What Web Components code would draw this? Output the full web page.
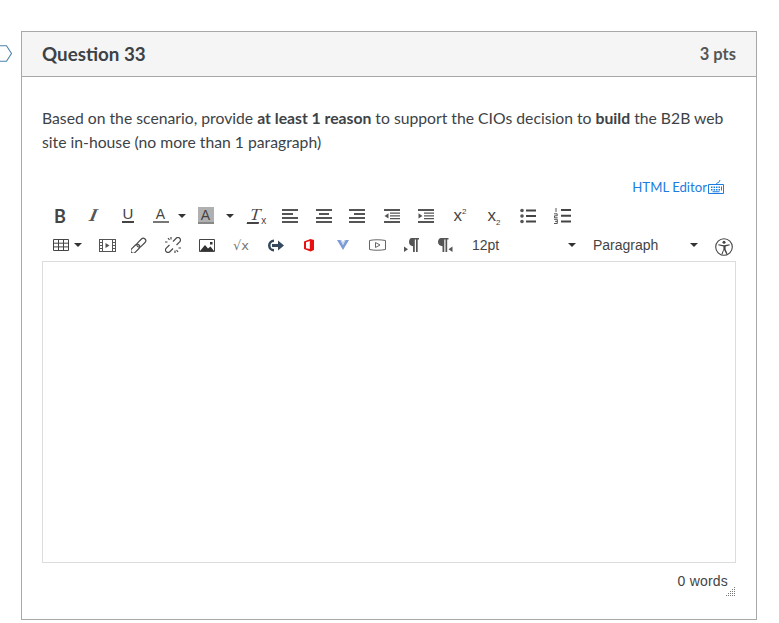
<!DOCTYPE html>
<html>
<head>
<meta charset="utf-8">
<title>Question 33</title>
<style>
  html, body { margin: 0; height: 100%; background: #fff; overflow: hidden; }
  body { font-family: Lato, "Liberation Sans", sans-serif; color: #3d4246; }
</style>
</head>
<body>
<quiz-page>
  <quiz-question name="Question 33" points="3 pts">
    <p>Based on the scenario, provide <b>at least 1 reason</b> to support the CIOs decision to <b>build</b> the B2B web<br>site in-house (no more than 1 paragraph)</p>
    <rce-editor slot="editor"></rce-editor>
  </quiz-question>
</quiz-page>

<script>
const ICONS = {
  table: `<path fill="none" stroke="#444" d="M.5.5h15v11H.5zM.5 4.200h15M.5 7.900h15M5.500.5v11M10.500.5v11"/>`,
  media: `<path fill="#555" fill-rule="evenodd" d="M0 0h17v13H0zM1 1v2h2V1zM1 4v2h2V4zM1 7v2h2V7zM1 10v2h2v-2zM14 1v2h2V1zM14 4v2h2V4zM14 7v2h2V7zM14 10v2h2v-2zM4 1v11h9V1z"/><path fill="#555" d="M6.500 4l4 2.500-4 2.500z"/>`,
  link: `<g fill="none" stroke="#4a4a4a" stroke-width="1.200" transform="rotate(-45 8 8)"><rect x="-2.500" y="5.500" width="10.500" height="5" rx="2.500"/><rect x="6" y="5.500" width="10.500" height="5" rx="2.500"/></g>`,
  unlink: `<g fill="none" stroke="#4a4a4a" stroke-width="1.200"><g transform="rotate(-45 8 8)"><path d="M5.500 5.500H1a2.500 2.500 0 0 0 0 5h4.500"/><path d="M10.500 5.500H15a2.500 2.500 0 0 1 0 5h-4.500"/></g><path d="M3 1l1.500 2M0 5h2.500M6 0v2.500M13 15l-1.500-2M16 11h-2.500M10 16v-2.500"/></g>`,
  image: `<path fill="none" stroke="#444" d="M.5.5h15v12H.5z"/><path fill="#333" d="M1 12l5-6 3 3.500 2.500-2L15 12zM11 3h2.500v2.500H11z"/>`,
  embed: `<path fill="#34495e" d="M8 1.500a6 6 0 1 0 0 12V11a3.500 3.500 0 1 1 0-7z"/><path fill="#34495e" d="M6 6h6V2.500l6 5-6 5V9H6z"/>`,
  office: `<path fill="#e81010" fill-rule="evenodd" d="M0 2.500L6.500 0 10 1v10l-3.500 1.500L0 10zM2 3.300v5.900l3.800.9V1.900z"/>`,
  vee: `<path fill="#7d9bd6" d="M0 0h3.500l2.500 5 2.500-5H12L6 10z"/><path fill="#c7d5ee" d="M3.500 0h1.300l1.200 2.500L7.200 0h1.300L6 5z"/>`,
  video: `<path fill="none" stroke="#666" d="M.5 1.500C5 .5 11 .5 16.500 1.500v9C11 11.500 5 11.500.5 10.500z"/><path fill="none" stroke="#666" d="M6.500 3.500l4.500 2.500-4.500 2.500z"/>`,
  ltr: `<path fill="#555" d="M7.500 0H15v1.500h-1.300V14H12V1.500h-1.200V14H9V8.200C6.600 8.200 5 6.500 5 4.100S6 0 7.500 0z"/><path fill="#555" d="M0 8.500l4 2.700-4 2.700z"/>`,
  rtl: `<path fill="#555" d="M3 0h7.500v1.500H9.200V14H7.500V1.500H6.300V14H4.500V8.200C2 8.200 0 6.500 0 4.100S1.200 0 3 0z"/><path fill="#555" d="M14.500 8.500l-4 2.700 4 2.700z"/>`,
  a11y: `<circle cx="9" cy="9" r="8.300" fill="none" stroke="#444" stroke-width="1.100"/><circle cx="9" cy="4.300" r="1.500" fill="#444"/><path fill="#444" d="M3.500 6.200L9 7.200l5.500-1 .3 1-4.200 1.300v2.700l1.900 4.600-1.100.4L9 11.800l-1.400 4.400-1.100-.4 1.900-4.600V8.500L3.200 7.200z"/>`,
  keyboard: `<path fill="none" stroke="#1c7ce0" stroke-width="1" d="M.5 5.500h15v9H.5zM8 5.500C8 3.500 12 4 12 1"/><path fill="#1c7ce0" d="M3 7.500h1.500V9H3zM5.500 7.500H7V9H5.500zM8 7.500h1.500V9H8zM10.500 7.500H12V9h-1.500zM3 10h1.500v1.500H3zM5.500 10H7v1.500H5.500zM8 10h1.500v1.500H8zM10.500 10H12v1.500h-1.500zM13 7.500h1V11.500h-1zM4.500 12.300h7v1h-7z"/>`,
  left: `<path fill="#555" d="M0 0h16v2H0zM0 4h11v2H0zM0 8h16v2H0zM0 12h16v2H0z"/>`,
  center: `<path fill="#555" d="M0 0h16v2H0zM3 4h10v2H3zM0 8h16v2H0zM0 12h16v2H0z"/>`,
  right: `<path fill="#555" d="M0 0h16v2H0zM5 4h11v2H5zM0 8h16v2H0zM0 12h16v2H0z"/>`,
  outdent: `<path fill="#555" d="M0 0h16v2H0zM6 3.500h10v1.300H6zM6 6.200h10v1.300H6zM6 8.900h10v1.300H6zM0 12h16v2H0zM4.500 4.200v5.400L.5 6.900z"/>`,
  indent: `<path fill="#555" d="M0 0h16v2H0zM6 3.500h10v1.300H6zM6 6.200h10v1.300H6zM6 8.900h10v1.300H6zM0 12h16v2H0zM.5 4.200v5.400l4-2.700z"/>`,
  bullets: `<path fill="#444" d="M6 1.500h10v2H6zM6 7h10v2H6zM6 12.500h10v2H6z"/><circle cx="2" cy="2.500" r="1.800" fill="#555"/><circle cx="2" cy="8" r="1.800" fill="#555"/><circle cx="2" cy="13.500" r="1.800" fill="#555"/>`,
  numbers: `<path fill="#444" d="M7 1h10v2H7zM7 6.800h10v2H7zM7 12.500h10v2H7z"/><path fill="none" stroke="#444" stroke-width=".9" d="M2 0v4M0 5.800h3.200v2H.5v2h3.200M0 11.300h3.300v4.200H0M1 13.400h2.300"/>`,
  corner: `<path fill="#777" d="M9 0h1v1H9zM7 2h1v1H7zM9 2h1v1H9zM5 4h1v1H5zM7 4h1v1H7zM9 4h1v1H9zM3 6h1v1H3zM5 6h1v1H5zM7 6h1v1H7zM9 6h1v1H9zM1 8h1v1H1zM3 8h1v1H3zM5 8h1v1H5zM7 8h1v1H7zM9 8h1v1H9z"/>`
};

function svg(name, w, h) {
  return `<svg width="${w}" height="${h}" viewBox="0 0 ${w} ${h}">${ICONS[name]}</svg>`;
}

class QuizPage extends HTMLElement {
  constructor() {
    super();
    this.attachShadow({ mode: "open" });
    this.shadowRoot.innerHTML = `
      <style>
        :host { display: block; padding: 31px 22px 0 21px; position: relative; }
        .marker { position: absolute; left: -5px; top: 45px; }
      </style>
      <svg class="marker" width="18" height="17" viewBox="0 0 18 17"><path fill="#fff" stroke="#4a84a8" stroke-width="1.100" d="M.5.800h11l5 7.700-5 7.700H.5z"/></svg>
      <slot></slot>`;
  }
}

class QuizQuestion extends HTMLElement {
  constructor() {
    super();
    this.attachShadow({ mode: "open" });
    this.shadowRoot.innerHTML = `
      <style>
        :host { display: block; border: 1px solid #a8a8a8; box-sizing: border-box; color: #3d4246; height: 589px; }
        header {
          display: flex; justify-content: space-between; align-items: center;
          height: 42px; padding: 0 20px 2px; background: #f5f5f5;
          border-bottom: 1px solid #a8a8a8; font-weight: 700;
        }
        .name { font-size: 18.800px; }
        .pts { font-size: 16.500px; color: #555; margin-top: 1px; }
        .text { padding: 29px 20px 0; font-size: 15.730px; line-height: 24px; height: 71px; }
        ::slotted(p) { margin: 0; }
        .ed { padding: 0 20px; }
      </style>
      <header><span class="name"></span><span class="pts"></span></header>
      <div class="text"><slot></slot></div>
      <div class="ed"><slot name="editor"></slot></div>`;
    this.shadowRoot.querySelector(".name").textContent = this.getAttribute("name");
    this.shadowRoot.querySelector(".pts").textContent = this.getAttribute("points");
  }
}

class TbBtn extends HTMLElement {
  constructor() {
    super();
    this.attachShadow({ mode: "open" });
    const w = this.getAttribute("w") || 34;
    const icon = this.getAttribute("icon");
    const iw = this.getAttribute("iw") || 16, ih = this.getAttribute("ih") || 14;
    this.shadowRoot.innerHTML = `
      <style>
        :host { display: flex; width: ${w}px; height: 30px; align-items: center; justify-content: center; flex: none; }
        svg { display: block; }
      </style>
      ${icon ? svg(icon, iw, ih) : ""}<slot></slot>`;
  }
}

class TbCaret extends HTMLElement {
  constructor() {
    super();
    this.attachShadow({ mode: "open" });
    this.shadowRoot.innerHTML = `
      <style>
        :host { display: inline-block; width: 0; height: 0; border: 4px solid transparent; border-top-color: #333; border-bottom: 0; flex: none; }
      </style>`;
  }
}

class RceEditor extends HTMLElement {
  constructor() {
    super();
    this.attachShadow({ mode: "open" });
    this.shadowRoot.innerHTML = `
      <style>
        :host { display: block; font-family: "Liberation Sans", Arial, sans-serif; color: #444; }
        .switch { display: flex; justify-content: flex-end; align-items: flex-start; height: 24px; padding-right: 12px;
          font-family: Lato, "Liberation Sans", sans-serif; font-size: 13.200px; color: #1c7ce0; line-height: 20px; }
        .switch svg { margin: 2px 0 0 1px; display: block; }
        .row { display: flex; align-items: center; height: 30px; padding-left: 1px; }
        .row.first { height: 29px; }
        .b { font: 700 18px Lato, sans-serif; color: #444; }
        .i { font: 700 18px "Liberation Serif", serif; color: #555; display: inline-block; transform: skewX(-22deg); }
        .u { font: 400 15px "Liberation Sans", sans-serif; color: #444; border-bottom: 2px solid #444; line-height: 12px; height: 13px; padding: 0 1px; }
        .a { font: 400 14px "Liberation Sans", sans-serif; color: #444; border-bottom: 2px solid #777; line-height: 13px; padding: 0 1px; width: 14px; text-align: center; }
        .ah { background: #b0b0b0; border-bottom-color: #888; padding: 2px 1px 0; }
        .t { font: 400 16px "Liberation Serif", serif; color: #444; line-height: 14px; display: inline-flex; align-items: flex-end; margin-left: 2px; }
        .t i { display: inline-block; font-style: normal; border-bottom: 2px solid #444; transform: skewX(-16deg); padding: 0 1px; height: 15px; font-size: 17px; line-height: 16px; }
        .t em { font: 400 10px "Liberation Sans", sans-serif; line-height: 10px; margin-bottom: -2px; }
        sub, sup { font-size: 8px; line-height: 0; }
        .x { font: 400 17px "Liberation Sans", sans-serif; color: #444; }
        .sq { font: 400 13px "DejaVu Sans", sans-serif; color: #777; }
        .sz { flex: none; width: 118px; display: flex; justify-content: space-between; align-items: center; padding: 0 4px 0 10px; box-sizing: border-box; font-size: 14px; }
        .para { flex: none; width: 114px; display: flex; justify-content: space-between; align-items: center; padding: 0 9px 0 0; box-sizing: border-box; margin-left: 13px; font-size: 14px; }
        .area { height: 302px; border: 1px solid #dcdcdc; box-sizing: border-box; margin-top: 1px; background: #fff; }
        .foot { display: flex; justify-content: flex-end; align-items: flex-start; padding: 10px 0 0 0; font-size: 14px; position: relative; height: 30px; color: #444; }
        .foot span { margin-right: 8px; letter-spacing: .2px; }
        .foot svg { position: absolute; right: 1px; top: 24px; }
      </style>
      <div class="switch"><span>HTML Editor</span>${svg("keyboard", 16, 15)}</div>
      <div class="row first">
        <tb-btn><span class="b">B</span></tb-btn>
        <tb-btn><span class="i">I</span></tb-btn>
        <tb-btn><span class="u">U</span></tb-btn>
        <tb-btn w="46"><span class="a" style="margin-left:2px">A</span><tb-caret style="margin-left:9px"></tb-caret></tb-btn>
        <tb-btn w="49"><span class="a ah">A</span><tb-caret style="margin-left:12px"></tb-caret></tb-btn>
        <tb-btn w="33"><span class="t"><i>T</i><em>x</em></span></tb-btn>
        <tb-btn icon="left"></tb-btn>
        <tb-btn icon="center"></tb-btn>
        <tb-btn icon="right" style="margin-left:-1px"></tb-btn>
        <tb-btn icon="outdent" style="margin-left:1px"></tb-btn>
        <tb-btn icon="indent"></tb-btn>
        <tb-btn><span class="x">x<sup>2</sup></span></tb-btn>
        <tb-btn><span class="x">x<sub>2</sub></span></tb-btn>
        <tb-btn icon="bullets" iw="16" ih="16"></tb-btn>
        <tb-btn icon="numbers" iw="17" ih="16"></tb-btn>
      </div>
      <div class="row">
        <tb-btn w="46"><span style="display:flex;align-items:center;gap:5px;margin-left:2px">${svg("table", 16, 12)}<tb-caret></tb-caret></span></tb-btn>
        <tb-btn icon="media" iw="17" ih="13" w="30" style="margin-left:3px"></tb-btn>
        <tb-btn icon="link" iw="16" ih="16"></tb-btn>
        <tb-btn icon="unlink" iw="16" ih="16"></tb-btn>
        <tb-btn icon="image" iw="16" ih="13"></tb-btn>
        <tb-btn><span class="sq">√x</span></tb-btn>
        <tb-btn icon="embed" iw="18" ih="15"></tb-btn>
        <tb-btn icon="office" iw="10" ih="13"></tb-btn>
        <tb-btn icon="vee" iw="12" ih="10"></tb-btn>
        <tb-btn icon="video" iw="17" ih="12"></tb-btn>
        <tb-btn icon="ltr" iw="15" ih="14"></tb-btn>
        <tb-btn icon="rtl" iw="15" ih="14"></tb-btn>
        <div class="sz"><span>12pt</span><tb-caret></tb-caret></div>
        <div class="para"><span>Paragraph</span><tb-caret></tb-caret></div>
        <tb-btn icon="a11y" iw="18" ih="18" w="18" style="margin:4px 0 0 8px"></tb-btn>
      </div>
      <div class="area"></div>
      <div class="foot"><span>0 words</span>${svg("corner", 10, 9)}</div>`;
  }
}

customElements.define("quiz-page", QuizPage);
customElements.define("quiz-question", QuizQuestion);
customElements.define("tb-btn", TbBtn);
customElements.define("tb-caret", TbCaret);
customElements.define("rce-editor", RceEditor);
</script>
</body>
</html>
